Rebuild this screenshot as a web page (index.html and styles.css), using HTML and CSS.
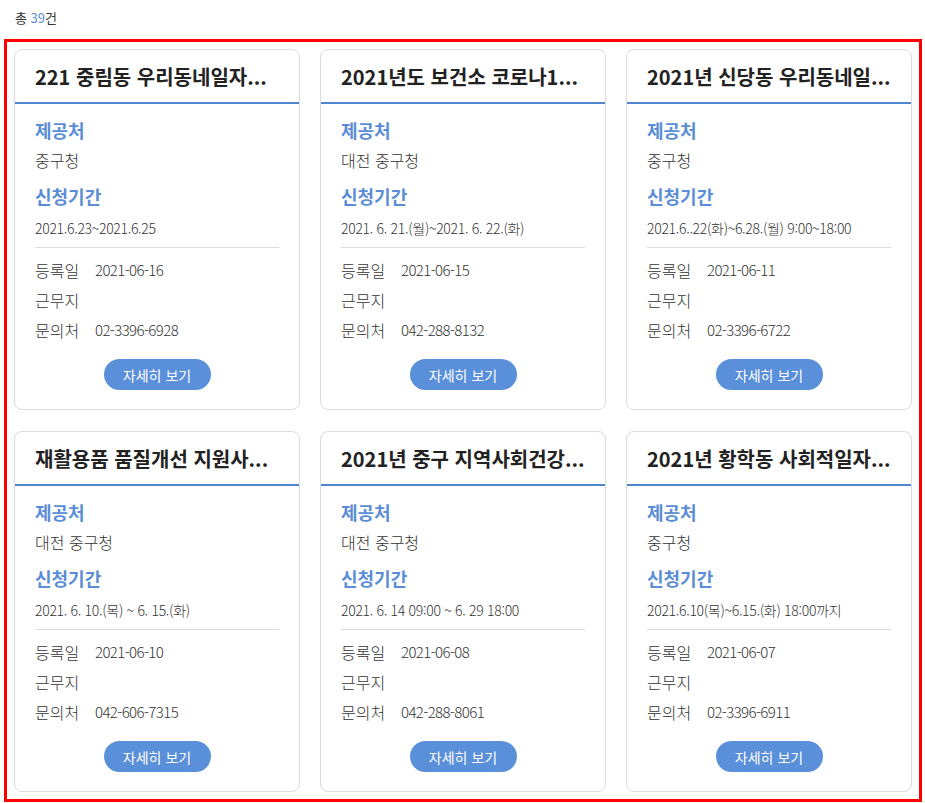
FILE: index.html
```html
<!DOCTYPE html>
<html lang="ko">
<head>
<meta charset="utf-8">
<title>목록</title>
<link rel="stylesheet" href="styles.css">
</head>
<body>
<div class="page">
  <div class="summary">총 <span class="count">39</span>건</div>
  <div class="board">
    <div class="card">
      <div class="card-title">221 중림동 우리동네일자...</div>
      <div class="card-body">
        <div class="label">제공처</div>
        <div class="value">중구청</div>
        <div class="label label-2">신청기간</div>
        <div class="period">2021.6.23~2021.6.25</div>
        <div class="divider"></div>
        <div class="row"><span class="key">등록일</span><span class="val">2021-06-16</span></div>
        <div class="row"><span class="key">근무지</span><span class="val"></span></div>
        <div class="row"><span class="key">문의처</span><span class="val">02-3396-6928</span></div>
        <div class="actions"><button class="btn">자세히 보기</button></div>
      </div>
    </div>
    <div class="card">
      <div class="card-title">2021년도 보건소 코로나1...</div>
      <div class="card-body">
        <div class="label">제공처</div>
        <div class="value">대전 중구청</div>
        <div class="label label-2">신청기간</div>
        <div class="period">2021. 6. 21.(월)~2021. 6. 22.(화)</div>
        <div class="divider"></div>
        <div class="row"><span class="key">등록일</span><span class="val">2021-06-15</span></div>
        <div class="row"><span class="key">근무지</span><span class="val"></span></div>
        <div class="row"><span class="key">문의처</span><span class="val">042-288-8132</span></div>
        <div class="actions"><button class="btn">자세히 보기</button></div>
      </div>
    </div>
    <div class="card">
      <div class="card-title">2021년 신당동 우리동네일...</div>
      <div class="card-body">
        <div class="label">제공처</div>
        <div class="value">중구청</div>
        <div class="label label-2">신청기간</div>
        <div class="period">2021.6..22(화)~6.28.(월) 9:00~18:00</div>
        <div class="divider"></div>
        <div class="row"><span class="key">등록일</span><span class="val">2021-06-11</span></div>
        <div class="row"><span class="key">근무지</span><span class="val"></span></div>
        <div class="row"><span class="key">문의처</span><span class="val">02-3396-6722</span></div>
        <div class="actions"><button class="btn">자세히 보기</button></div>
      </div>
    </div>
    <div class="card">
      <div class="card-title">재활용품 품질개선 지원사...</div>
      <div class="card-body">
        <div class="label">제공처</div>
        <div class="value">대전 중구청</div>
        <div class="label label-2">신청기간</div>
        <div class="period">2021. 6. 10.(목) ~ 6. 15.(화)</div>
        <div class="divider"></div>
        <div class="row"><span class="key">등록일</span><span class="val">2021-06-10</span></div>
        <div class="row"><span class="key">근무지</span><span class="val"></span></div>
        <div class="row"><span class="key">문의처</span><span class="val">042-606-7315</span></div>
        <div class="actions"><button class="btn">자세히 보기</button></div>
      </div>
    </div>
    <div class="card">
      <div class="card-title">2021년 중구 지역사회건강...</div>
      <div class="card-body">
        <div class="label">제공처</div>
        <div class="value">대전 중구청</div>
        <div class="label label-2">신청기간</div>
        <div class="period">2021. 6. 14 09:00 ~ 6. 29 18:00</div>
        <div class="divider"></div>
        <div class="row"><span class="key">등록일</span><span class="val">2021-06-08</span></div>
        <div class="row"><span class="key">근무지</span><span class="val"></span></div>
        <div class="row"><span class="key">문의처</span><span class="val">042-288-8061</span></div>
        <div class="actions"><button class="btn">자세히 보기</button></div>
      </div>
    </div>
    <div class="card">
      <div class="card-title">2021년 황학동 사회적일자...</div>
      <div class="card-body">
        <div class="label">제공처</div>
        <div class="value">중구청</div>
        <div class="label label-2">신청기간</div>
        <div class="period">2021.6.10(목)~6.15.(화) 18:00까지</div>
        <div class="divider"></div>
        <div class="row"><span class="key">등록일</span><span class="val">2021-06-07</span></div>
        <div class="row"><span class="key">근무지</span><span class="val"></span></div>
        <div class="row"><span class="key">문의처</span><span class="val">02-3396-6911</span></div>
        <div class="actions"><button class="btn">자세히 보기</button></div>
      </div>
    </div>
  </div>
</div>
</body>
</html>
```
FILE: styles.css
```css
* { box-sizing: border-box; }
html, body { margin: 0; padding: 0; background: #fff; }
body {
  font-family: "Noto Sans CJK KR", "Noto Sans", sans-serif;
  color: #333;
}
.page {
  padding: 8px 3px 0 4px;
}
.summary {
  padding-left: 11px;
  height: 20px;
  line-height: 20px;
  font-size: 13px;
  font-weight: 400;
  color: #333;
  margin-bottom: 11px;
}
.count { color: #5a8dd6; }
.board {
  border: 3px solid #ff0000;
  padding: 7px;
  display: grid;
  grid-template-columns: repeat(3, 1fr);
  column-gap: 20px;
  row-gap: 21px;
}
.card {
  border: 1px solid #dcdcdc;
  border-radius: 8px;
  overflow: hidden;
  height: 361px;
  background: #fff;
}
.card-title {
  height: 54px;
  line-height: 54px;
  padding: 0 18px 0 20px;
  font-size: 20px;
  font-weight: 700;
  color: #222;
  border-bottom: 2px solid #4f86cd;
  white-space: nowrap;
  overflow: hidden;
  text-overflow: ellipsis;
  letter-spacing: 0;
}
.card-body {
  padding: 0 20px 20px;
}
.label {
  margin-top: 11px;
  height: 30px;
  line-height: 30px;
  font-size: 18px;
  font-weight: 700;
  color: #5a8dd6;
}
.label-2 { margin-top: 6px; }
.value {
  height: 30px;
  line-height: 30px;
  font-size: 16px;
  font-weight: 300;
  color: #333;
}
.period {
  margin-top: 2px;
  height: 30px;
  line-height: 30px;
  font-size: 14px;
  font-weight: 300;
  letter-spacing: -0.3px;
  color: #333;
  white-space: nowrap;
}
.divider {
  margin-top: 4px;
  height: 1px;
  background: #dcdcdc;
}
.row {
  display: flex;
  height: 30px;
  line-height: 30px;
  font-size: 16px;
  font-weight: 300;
  color: #333;
}
.divider + .row { margin-top: 7px; }
.key { width: 60px; flex: none; }
.val { letter-spacing: -0.6px; font-size: 15px; }
.actions {
  display: flex;
  justify-content: center;
  margin-top: 14px;
}
.btn {
  width: 107px;
  height: 31px;
  border: 0;
  border-radius: 16px;
  background: #5a8fd9;
  color: #fff;
  font-family: "Noto Sans CJK KR", "Noto Sans", sans-serif;
  font-size: 14px;
  font-weight: 400;
  padding: 0;
  cursor: pointer;
}
```
